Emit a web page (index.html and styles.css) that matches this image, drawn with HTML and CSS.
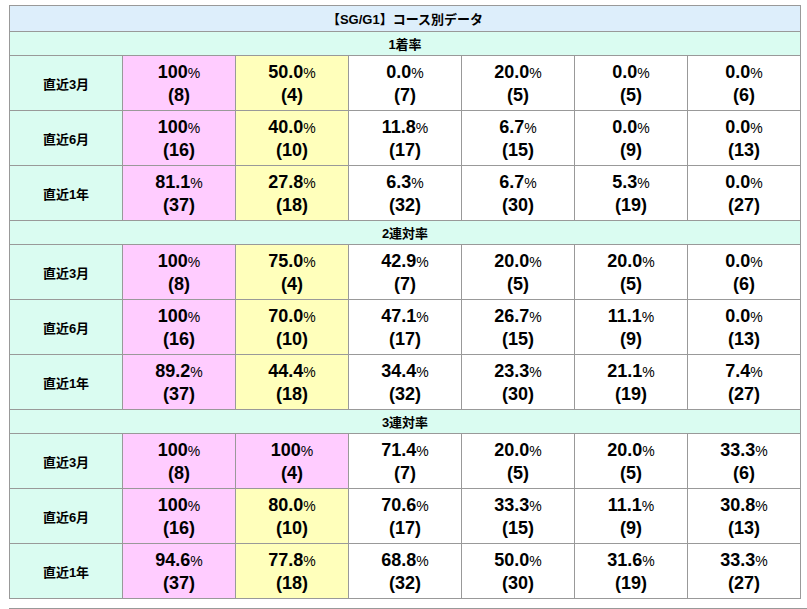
FILE: index.html
```html
<!DOCTYPE html>
<html lang="ja">
<head>
<meta charset="utf-8">
<link rel="stylesheet" href="styles.css">
</head>
<body>
<table class="data">
<colgroup><col><col><col><col><col><col><col></colgroup>
<tr class="title"><th colspan="7">【SG/G1】コース別データ</th></tr>
<tr class="sub"><th colspan="7">1着率</th></tr>
<tr><th class="lbl">直近3月</th><td class="pk">100<span class="pc">%</span><br>(8)</td><td class="ye">50.0<span class="pc">%</span><br>(4)</td><td>0.0<span class="pc">%</span><br>(7)</td><td>20.0<span class="pc">%</span><br>(5)</td><td>0.0<span class="pc">%</span><br>(5)</td><td>0.0<span class="pc">%</span><br>(6)</td></tr>
<tr><th class="lbl">直近6月</th><td class="pk">100<span class="pc">%</span><br>(16)</td><td class="ye">40.0<span class="pc">%</span><br>(10)</td><td>11.8<span class="pc">%</span><br>(17)</td><td>6.7<span class="pc">%</span><br>(15)</td><td>0.0<span class="pc">%</span><br>(9)</td><td>0.0<span class="pc">%</span><br>(13)</td></tr>
<tr><th class="lbl">直近1年</th><td class="pk">81.1<span class="pc">%</span><br>(37)</td><td class="ye">27.8<span class="pc">%</span><br>(18)</td><td>6.3<span class="pc">%</span><br>(32)</td><td>6.7<span class="pc">%</span><br>(30)</td><td>5.3<span class="pc">%</span><br>(19)</td><td>0.0<span class="pc">%</span><br>(27)</td></tr>
<tr class="sub"><th colspan="7">2連対率</th></tr>
<tr><th class="lbl">直近3月</th><td class="pk">100<span class="pc">%</span><br>(8)</td><td class="ye">75.0<span class="pc">%</span><br>(4)</td><td>42.9<span class="pc">%</span><br>(7)</td><td>20.0<span class="pc">%</span><br>(5)</td><td>20.0<span class="pc">%</span><br>(5)</td><td>0.0<span class="pc">%</span><br>(6)</td></tr>
<tr><th class="lbl">直近6月</th><td class="pk">100<span class="pc">%</span><br>(16)</td><td class="ye">70.0<span class="pc">%</span><br>(10)</td><td>47.1<span class="pc">%</span><br>(17)</td><td>26.7<span class="pc">%</span><br>(15)</td><td>11.1<span class="pc">%</span><br>(9)</td><td>0.0<span class="pc">%</span><br>(13)</td></tr>
<tr><th class="lbl">直近1年</th><td class="pk">89.2<span class="pc">%</span><br>(37)</td><td class="ye">44.4<span class="pc">%</span><br>(18)</td><td>34.4<span class="pc">%</span><br>(32)</td><td>23.3<span class="pc">%</span><br>(30)</td><td>21.1<span class="pc">%</span><br>(19)</td><td>7.4<span class="pc">%</span><br>(27)</td></tr>
<tr class="sub"><th colspan="7">3連対率</th></tr>
<tr><th class="lbl">直近3月</th><td class="pk">100<span class="pc">%</span><br>(8)</td><td class="pk">100<span class="pc">%</span><br>(4)</td><td>71.4<span class="pc">%</span><br>(7)</td><td>20.0<span class="pc">%</span><br>(5)</td><td>20.0<span class="pc">%</span><br>(5)</td><td>33.3<span class="pc">%</span><br>(6)</td></tr>
<tr><th class="lbl">直近6月</th><td class="pk">100<span class="pc">%</span><br>(16)</td><td class="ye">80.0<span class="pc">%</span><br>(10)</td><td>70.6<span class="pc">%</span><br>(17)</td><td>33.3<span class="pc">%</span><br>(15)</td><td>11.1<span class="pc">%</span><br>(9)</td><td>30.8<span class="pc">%</span><br>(13)</td></tr>
<tr><th class="lbl">直近1年</th><td class="pk">94.6<span class="pc">%</span><br>(37)</td><td class="ye">77.8<span class="pc">%</span><br>(18)</td><td>68.8<span class="pc">%</span><br>(32)</td><td>50.0<span class="pc">%</span><br>(30)</td><td>31.6<span class="pc">%</span><br>(19)</td><td>33.3<span class="pc">%</span><br>(27)</td></tr>
</table>
<div class="rule"></div>
</body>
</html>
```
FILE: styles.css
```css
html, body {
  margin: 0;
  padding: 0;
  background: #fff;
}
body {
  padding: 5px 0 0 9px;
  font-family: "Liberation Sans", Arial, "Noto Sans CJK JP", sans-serif;
  color: #000;
}
.data {
  border-collapse: collapse;
  table-layout: fixed;
  width: 792px;
  border: 1px solid #999;
}
.data th, .data td {
  border: 1px solid #999;
  text-align: center;
  padding: 0;
}
.title th {
  background: #ddeefb;
  height: 25px;
  font-size: 13px;
  font-weight: bold;
  font-family: "Liberation Sans", "Noto Sans CJK JP", sans-serif;
}
.sub th {
  background: #dafcf1;
  height: 23px;
  font-size: 13px;
  font-weight: bold;
  font-family: "Liberation Sans", "Noto Sans CJK JP", sans-serif;
}
.lbl {
  background: #dafcf1;
  font-size: 13px;
  font-weight: bold;
  font-family: "Liberation Sans", "Noto Sans CJK JP", sans-serif;
}
.data td {
  height: 54px;
  font-size: 18px;
  line-height: 22px;
  font-weight: bold;
  background: #fff;
}
.data td.pk {
  background: #ffccff;
}
.data td.ye {
  background: #ffffbb;
}
.pc {
  font-size: 14px;
  font-weight: normal;
}
.rule {
  margin-top: 9px;
  border-top: 1px solid #999;
  width: 798px;
}
```
